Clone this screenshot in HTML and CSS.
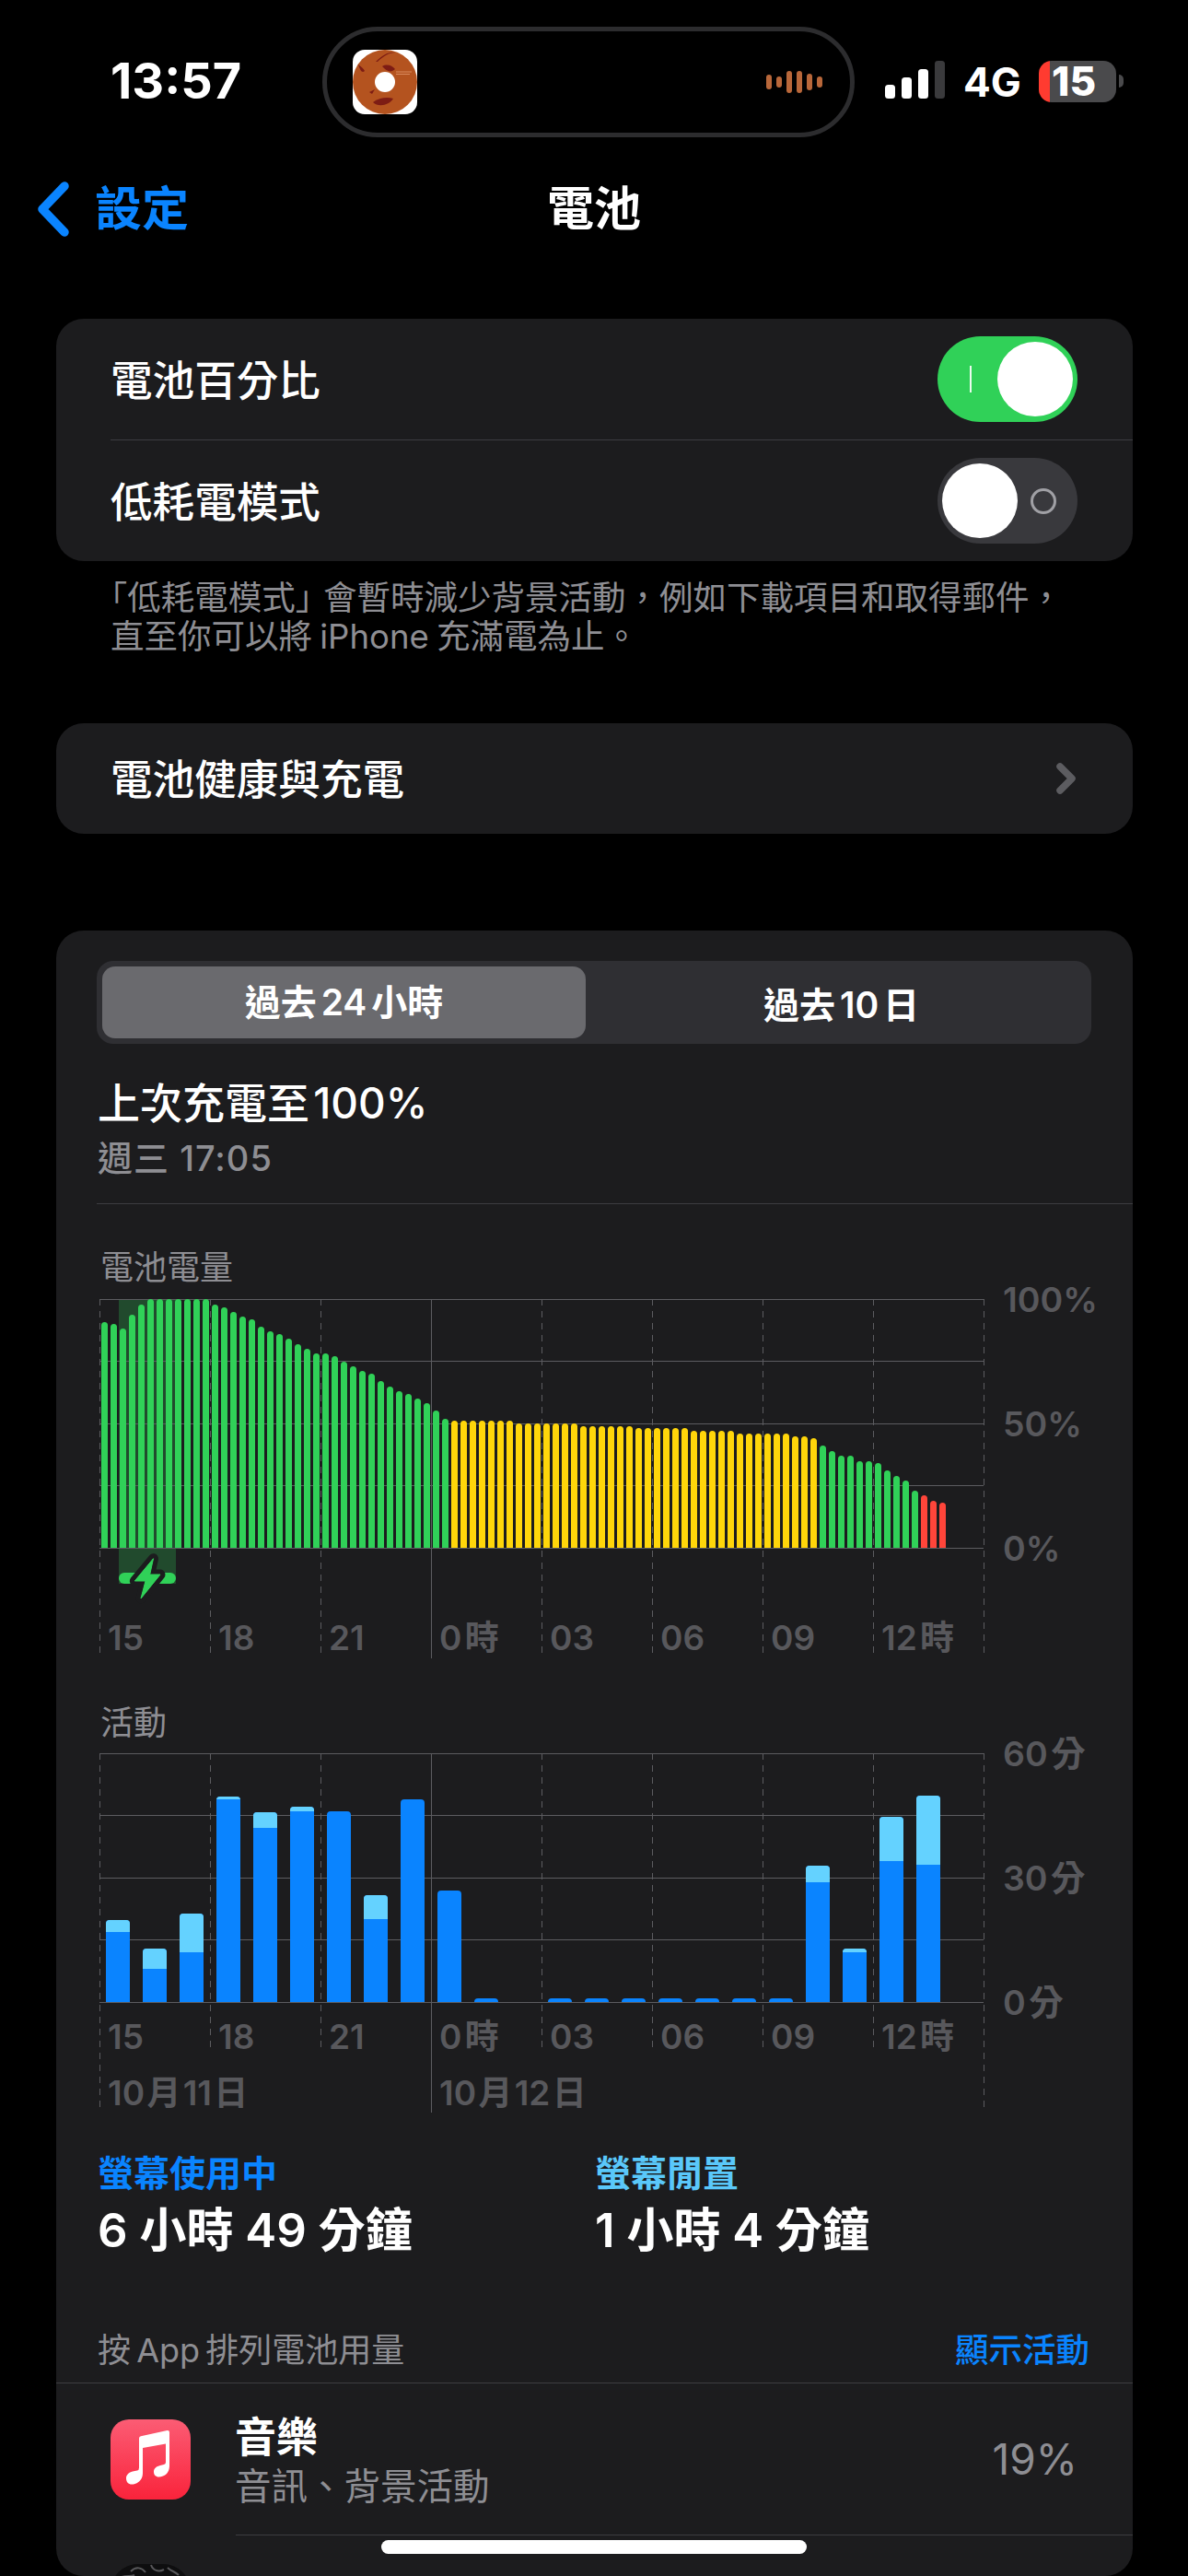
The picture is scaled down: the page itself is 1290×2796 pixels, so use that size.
FILE: index.html
```html
<!DOCTYPE html>
<html lang="zh-Hant">
<head>
<meta charset="utf-8">
<title>電池</title>
<link rel="stylesheet" href="styles.css">
</head>
<body>
<header class="status">
  <div class="time">13:57</div>
  <div class="island">
    <svg class="art" width="70" height="70" viewBox="0 0 70 70">
      <rect width="70" height="70" rx="13" fill="#fff"/>
      <circle cx="35" cy="35" r="35" fill="#b4531f"/>
      <circle cx="35" cy="35" r="11" fill="#fff"/>
      <path d="M25 13C32 6 39 2 46 3C40 3 33 7 27 13Z" fill="#7d1c14"/>
      <path d="M32 18C37 15 43 17 46 21C42 25 37 24 32 18Z" fill="#7d1c14"/>
      <path d="M6 16C9 18 12 21 13 23C10 26 8 22 6 16Z" fill="#7d1c14"/>
      <path d="M18 46L24 43L21 48Z" fill="#7d1c14"/>
      <path d="M22 57C28 52 38 51 44 53C40 60 28 63 22 57Z" fill="#7d1c14"/>
      <path d="M47 24H64M47 26.500H62" stroke="#d98a5e" stroke-width="1"/>
    </svg>
    <div class="wave">
      <i class="w16"></i><i class="w12"></i><i class="w24"></i><i class="w24"></i><i class="w18"></i><i class="w12"></i>
    </div>
  </div>
  <div class="sys">
    <svg class="signal" width="65" height="41" viewBox="0 0 65 41">
      <rect x="0" y="26" width="11" height="15" rx="3.500" fill="#fff"/>
      <rect x="18" y="18" width="11" height="23" rx="3.500" fill="#fff"/>
      <rect x="36" y="9" width="11" height="32" rx="3.500" fill="#fff"/>
      <rect x="54" y="0" width="11" height="41" rx="3.500" fill="#3a3a3c"/>
    </svg>
    <span class="net">4G</span>
    <div class="battery"><span>15</span></div>
    <i class="nub"></i>
  </div>
</header>

<nav class="nav">
  <a class="back">
    <svg width="36" height="60" viewBox="0 0 36 60"><path d="M30 5L6 30L30 55" fill="none" stroke="#0a84ff" stroke-width="9.500" stroke-linecap="round" stroke-linejoin="round"/></svg>
    <span>設定</span>
  </a>
  <h1 class="title">電池</h1>
  <div></div>
</nav>

<main class="main">
  <section class="card">
    <div class="row">
      <span>電池百分比</span>
      <div class="toggle on"><i class="bar"></i><i class="knob"></i></div>
    </div>
    <div class="sep"></div>
    <div class="row">
      <span>低耗電模式</span>
      <div class="toggle"><i class="knob"></i><i class="ring"></i></div>
    </div>
  </section>
  <p class="note"><span class="open">「</span>低耗電模式<span class="close">」</span>會暫時減少背景活動&#xFF0C;例如下載項目和取得郵件&#xFF0C;<br>直至你可以將 iPhone 充滿電為止。</p>

  <section class="card health">
    <div class="row tall">
      <span>電池健康與充電</span>
      <svg width="23" height="36" viewBox="0 0 23 36"><path d="M4 5L17 18L4 31" fill="none" stroke="#5c5c60" stroke-width="7.500" stroke-linecap="round" stroke-linejoin="round"/></svg>
    </div>
  </section>

  <section class="card usage">
    <div class="seg">
      <div class="thumb">過去 24 小時</div>
      <div class="other">過去 10 日</div>
    </div>
    <div class="last">上次充電至 100%</div>
    <div class="when">週三 17:05</div>
    <div class="rule"></div>

    <div class="ctitle">電池電量</div>
    <div class="chart">
      <div class="plot">
        <svg class="grid" width="961" height="391" viewBox="0 0 961 391">
          <rect x="21" y="0" width="67" height="270" fill="#214a2d"/>
          <rect x="21" y="270" width="62" height="39" fill="#214a2d"/>
          <rect x="21" y="297" width="62" height="12" rx="6" fill="#30d158"/>
          <path class="hl" d="M0 0.500H960M0 67.500H960M0 135.500H960M0 202.500H960M0 270.500H960"/>
          <path class="dash" d="M0.500 0V384M120.500 0V384M240.500 0V384M480.500 0V384M600.500 0V384M720.500 0V384M840.500 0V384M960.500 0V384"/>
          <path class="hl" d="M360.500 0V390"/>
          <path d="M58.500 281.700L38.300 306H50L45 325L66 299H54.700Z" fill="#30d158" stroke="#1c1c1e" stroke-width="11" stroke-linejoin="round" paint-order="stroke"/>
          <path d="M58.500 281.700L38.300 306H50L45 325L66 299H54.700Z" fill="#30d158" stroke="#30d158" stroke-width="1" stroke-linejoin="round"/>
        </svg>
        <div class="bars">
          <i class="g" style="height:245.3px"></i><i class="g" style="height:242.7px"></i><i class="g" style="height:237.7px"></i><i class="g" style="height:253.3px"></i><i class="g" style="height:264.3px"></i><i class="g" style="height:270px"></i><i class="g" style="height:270px"></i><i class="g" style="height:270px"></i><i class="g" style="height:270px"></i><i class="g" style="height:270px"></i><i class="g" style="height:270px"></i><i class="g" style="height:270px"></i>
          <i class="g" style="height:264.3px"></i><i class="g" style="height:261.3px"></i><i class="g" style="height:255.7px"></i><i class="g" style="height:250.7px"></i><i class="g" style="height:247.7px"></i><i class="g" style="height:239.7px"></i><i class="g" style="height:234.7px"></i><i class="g" style="height:231.7px"></i><i class="g" style="height:226.7px"></i><i class="g" style="height:220.7px"></i><i class="g" style="height:215.7px"></i><i class="g" style="height:210.7px"></i>
          <i class="g" style="height:210.7px"></i><i class="g" style="height:207.7px"></i><i class="g" style="height:201.7px"></i><i class="g" style="height:196.7px"></i><i class="g" style="height:191.7px"></i><i class="g" style="height:188.7px"></i><i class="g" style="height:180.7px"></i><i class="g" style="height:174.7px"></i><i class="g" style="height:169.7px"></i><i class="g" style="height:166.7px"></i><i class="g" style="height:161.7px"></i><i class="g" style="height:156.7px"></i><i class="g" style="height:148.7px"></i><i class="g" style="height:139.7px"></i>
          <i class="y" style="height:137.7px"></i><i class="y" style="height:137.7px"></i><i class="y" style="height:137.7px"></i><i class="y" style="height:137.7px"></i><i class="y" style="height:137.7px"></i><i class="y" style="height:137.7px"></i><i class="y" style="height:137.7px"></i>
          <i class="y" style="height:134.7px"></i><i class="y" style="height:134.7px"></i><i class="y" style="height:134.7px"></i><i class="y" style="height:134.7px"></i><i class="y" style="height:134.7px"></i><i class="y" style="height:134.7px"></i><i class="y" style="height:134.7px"></i>
          <i class="y" style="height:131.7px"></i><i class="y" style="height:131.7px"></i><i class="y" style="height:131.7px"></i><i class="y" style="height:131.7px"></i><i class="y" style="height:131.7px"></i><i class="y" style="height:131.7px"></i>
          <i class="y" style="height:129.7px"></i><i class="y" style="height:129.7px"></i><i class="y" style="height:129.7px"></i><i class="y" style="height:129.7px"></i><i class="y" style="height:129.7px"></i><i class="y" style="height:129.7px"></i>
          <i class="y" style="height:126.7px"></i><i class="y" style="height:126.7px"></i><i class="y" style="height:126.7px"></i><i class="y" style="height:126.7px"></i><i class="y" style="height:126.7px"></i>
          <i class="y" style="height:123.7px"></i><i class="y" style="height:123.7px"></i><i class="y" style="height:123.7px"></i><i class="y" style="height:123.7px"></i><i class="y" style="height:123.7px"></i><i class="y" style="height:123.7px"></i>
          <i class="y" style="height:120.7px"></i><i class="y" style="height:120.7px"></i><i class="y" style="height:118.7px"></i>
          <i class="g" style="height:110.7px"></i><i class="g" style="height:104.7px"></i><i class="g" style="height:99.7px"></i><i class="g" style="height:99.7px"></i><i class="g" style="height:93.7px"></i><i class="g" style="height:93.7px"></i><i class="g" style="height:91.7px"></i><i class="g" style="height:83.7px"></i><i class="g" style="height:77.7px"></i><i class="g" style="height:72.7px"></i><i class="g" style="height:61.7px"></i>
          <i class="r" style="height:56.7px"></i><i class="r" style="height:50.7px"></i><i class="r" style="height:48.7px"></i>
        </div>
        <div class="xl first"><span>15</span><span>18</span><span>21</span><span>0 時</span><span>03</span><span>06</span><span>09</span><span>12 時</span></div>
      </div>
      <div class="yl"><span>100%</span><span>50%</span><span>0%</span></div>
    </div>

    <div class="ctitle second">活動</div>
    <div class="chart">
      <div class="plot">
        <svg class="grid" width="961" height="391" viewBox="0 0 961 391">
          <path class="hl" d="M0 0.500H960M0 67.500H960M0 135.500H960M0 202.500H960M0 270.500H960"/>
          <path class="dash" d="M0.500 0V384M120.500 0V324M240.500 0V324M480.500 0V324M600.500 0V324M720.500 0V324M840.500 0V324M960.500 0V384"/>
          <path class="hl" d="M360.500 0V390"/>
        </svg>
        <div class="abars">
          <div class="a" style="height:88.7px"><i style="height:13px"></i></div>
          <div class="a" style="height:57.7px"><i style="height:21.7px"></i></div>
          <div class="a" style="height:95.7px"><i style="height:42px"></i></div>
          <div class="a" style="height:222.7px"><i style="height:3px"></i></div>
          <div class="a" style="height:205.7px"><i style="height:17px"></i></div>
          <div class="a" style="height:211.7px"><i style="height:5px"></i></div>
          <div class="a" style="height:206.7px"></div>
          <div class="a" style="height:115.7px"><i style="height:26px"></i></div>
          <div class="a" style="height:219.7px"></div>
          <div class="a" style="height:120.7px"></div>
          <div class="a" style="height:3.7px"></div>
          <div class="a" style="height:0"></div>
          <div class="a" style="height:3.7px"></div>
          <div class="a" style="height:3.7px"></div>
          <div class="a" style="height:3.7px"></div>
          <div class="a" style="height:3.7px"></div>
          <div class="a" style="height:3.7px"></div>
          <div class="a" style="height:3.7px"></div>
          <div class="a" style="height:3.7px"></div>
          <div class="a" style="height:147.7px"><i style="height:18px"></i></div>
          <div class="a" style="height:57.7px"><i style="height:4px"></i></div>
          <div class="a" style="height:200.7px"><i style="height:48px"></i></div>
          <div class="a" style="height:223.7px"><i style="height:75px"></i></div>
        </div>
        <div class="xl"><span>15</span><span>18</span><span>21</span><span>0 時</span><span>03</span><span>06</span><span>09</span><span>12 時</span></div>
        <div class="dates"><span>10 月 11 日</span><span>10 月 12 日</span></div>
      </div>
      <div class="yl"><span>60 分</span><span>30 分</span><span>0 分</span></div>
    </div>

    <div class="stats">
      <div><div class="slabel blue">螢幕使用中</div><div class="sval">6 小時 49 分鐘</div></div>
      <div><div class="slabel cyan">螢幕閒置</div><div class="sval">1 小時 4 分鐘</div></div>
    </div>

    <div class="byapp"><span>按 App 排列電池用量</span><span class="blue">顯示活動</span></div>
    <div class="app">
      <svg class="icon" width="87" height="87" viewBox="0 0 87 87">
        <defs><linearGradient id="mg" x1="0" y1="0" x2="0" y2="1"><stop offset="0" stop-color="#fb5c74"/><stop offset="1" stop-color="#fa233b"/></linearGradient></defs>
        <rect width="87" height="87" rx="20" fill="url(#mg)"/>
        <path d="M31 20.500Q31 18.700 33 18.200L61.500 12Q64 11.600 64 14V50C64 55.500 62 59.500 57 61.500C51 64 47 61.500 47 57C47 53 50 51 54 50L58 49Q60 48.500 60 46.500V26.500L35 31V58C35 63.500 32.500 68 26.500 70C20.500 72 17 68.500 17 64C17 60 20 57.500 24 56.500L29 55.500Q31 55 31 52.500Z" fill="#fff"/>
      </svg>
      <div class="atext"><div class="aname">音樂</div><div class="adesc">音訊、背景活動</div></div>
      <div class="apct">19%</div>
    </div>
    <div class="sep2"></div>
    <div class="app next">
      <svg class="icon" width="87" height="87" viewBox="0 0 87 87">
        <rect width="87" height="87" rx="30" fill="#0e0e0f"/>
        <path d="M22 8C28 2 34 4 38 9M44 1C46 7 52 9 58 6M62 4C66 8 70 8 74 12M12 14C18 12 22 14 26 12" fill="none" stroke="#57575a" stroke-width="2"/>
      </svg>
    </div>
  </section>
</main>
<div class="home"></div>
</body>
</html>
```

FILE: styles.css
```css
* { box-sizing: border-box; }
html, body { margin: 0; padding: 0; height: 2796px; overflow: hidden; background: #000; }
body {
  position: relative;
  color: #fff;
  font-family: Inter, "Noto Sans CJK TC", sans-serif;
}
i { display: block; }

/* status bar */
.status { display: grid; grid-template-columns: 350px 578px 1fr; height: 178px; padding-top: 29px; }
.time { height: 120px; padding-left: 120px; font-size: 54px; font-weight: 700; line-height: 118px; }
.island {
  display: flex; align-items: center; justify-content: space-between;
  height: 120px; padding: 0 30px 0 28px;
  background: #000; border: 5px solid #2c2c2e; border-radius: 60px;
}
.wave { display: flex; align-items: center; gap: 5px; }
.wave i { width: 6px; border-radius: 3px; background: #b8673a; }
.w12 { height: 12px; } .w16 { height: 16px; } .w18 { height: 18px; } .w24 { height: 24px; }
.sys { display: flex; align-items: flex-start; padding: 37px 0 0 33px; }
.signal { display: block; }
.net { width: 60px; margin: 3px 0 0 20px; font-size: 44px; font-weight: 700; line-height: 41px; }
.battery {
  display: flex; align-items: center;
  width: 84px; height: 45px; margin-left: 22px; padding-left: 14px;
  border-radius: 14px;
  background: linear-gradient(90deg, #ff3b30 12px, #4a4a4c 12px);
  font-size: 44px; font-weight: 800; line-height: 45px;
}
.nub { width: 5px; height: 14px; margin: 15px 0 0 3px; border-radius: 0 5px 5px 0; background: #4a4a4c; }

/* nav */
.nav { display: grid; grid-template-columns: 1fr auto 1fr; align-items: center; height: 98px; }
.back { display: flex; align-items: center; gap: 27px; padding-left: 40px; color: #0a84ff; font-size: 51px; font-weight: 600; line-height: 60px; }
.back svg { display: block; }
.title { margin: 0; font-size: 51px; font-weight: 600; line-height: 60px; }

/* cards */
.main { padding: 70px 60px 0 61px; }
.card { background: #1c1c1e; border-radius: 30px; }
.row {
  display: flex; align-items: center; justify-content: space-between;
  height: 131px; padding: 0 60px 0 59px;
  font-size: 45.6px; font-weight: 500;
}
.row > span { margin-bottom: 3px; }
.row.tall { height: 120px; }
.row.tall > span { margin-bottom: 4px; }
.row svg { display: block; }
.sep { height: 1px; margin-left: 59px; background: #3d3d41; }
.toggle {
  display: flex; align-items: center;
  width: 152px; height: 93px; padding: 0 5px;
  border-radius: 47px; background: #39393d;
}
.toggle.on { background: #30d158; }
.knob { width: 82px; height: 81px; border-radius: 50%; background: #fff; }
.on .knob { margin-left: auto; }
.bar { width: 2px; height: 29px; margin-left: 30px; background: #fff; opacity: .9; }
.ring { width: 28px; height: 28px; margin: 0 18px 0 auto; border: 3px solid #a0a0a5; border-radius: 50%; }
.note { margin: 19px 0 0 59px; color: #8e8e93; font-size: 36.5px; line-height: 42px; white-space: nowrap; word-spacing: -2px; }
.open { font-feature-settings: "halt"; }
.close { font-feature-settings: "halt"; margin-right: 12px; }
.health { margin-top: 73px; }

.usage { margin-top: 105px; padding-top: 33px; height: 1786px; }
.seg {
  display: grid; grid-template-columns: 525px 1fr; align-items: center;
  width: 1080px; height: 90px; margin-left: 44px; padding: 6px;
  border-radius: 18px; background: #2f2f33;
  font-size: 39px; font-weight: 600; text-align: center; word-spacing: -5px;
}
.thumb { height: 78px; line-height: 78px; border-radius: 14px; background: #6a6a6e; }
.other { padding-left: 12px; }
.last { margin: 36px 0 0 45px; font-size: 46px; font-weight: 500; line-height: 56px; word-spacing: -8px; }
.when { margin: 10px 0 0 45px; color: #8e8e93; font-size: 38px; font-weight: 500; line-height: 44px; letter-spacing: 1px; }
.rule { height: 1px; margin: 27px 0 0 44px; background: #3d3d41; }

/* charts */
.ctitle { margin: 47px 0 12px 48px; color: #8e8e93; font-size: 36px; line-height: 44px; }
.ctitle.second { margin-top: 48px; margin-bottom: 11px; }
.chart { display: flex; align-items: flex-start; margin-left: 47px; }
.plot { position: relative; width: 960px; height: 390px; }
.grid { position: absolute; top: 0; left: 0; }
.hl { fill: none; stroke: #5c5c60; stroke-width: 1; }
.dash { fill: none; stroke: #5c5c60; stroke-width: 1; stroke-dasharray: 7 6; }
.bars { position: relative; display: flex; align-items: flex-end; gap: 3px; height: 270px; padding-left: 2px; }
.bars i { flex: none; width: 7px; border-radius: 3.5px 3.5px 0 0; }
.g { background: #30d158; }
.y { background: #ffd60a; }
.r { background: #ff453a; }
.abars { position: relative; display: flex; align-items: flex-end; gap: 14px; height: 270px; padding-left: 7px; }
.a { flex: none; width: 26px; border-radius: 4px 4px 0 0; overflow: hidden; background: #0a84ff; }
.a i { background: #64d2ff; }
.xl { position: relative; display: grid; grid-template-columns: repeat(8, 120px); margin-top: 18px; color: #58585c; font-size: 37px; font-weight: 600; line-height: 40px; word-spacing: -6px; }
.xl.first { margin-top: 78px; }
.xl span { padding-left: 9px; }
.dates { position: relative; display: grid; grid-template-columns: 360px 360px; margin-top: 21px; color: #58585c; font-size: 37px; font-weight: 600; line-height: 40px; word-spacing: -7px; }
.dates span { padding-left: 9px; }
.yl { display: flex; flex-direction: column; justify-content: space-between; height: 270px; margin: 1px 0 0 21px; color: #58585c; font-size: 37.5px; font-weight: 600; word-spacing: -6px; }
.yl span { height: 0; line-height: 0; white-space: nowrap; }

/* stats */
.stats { display: grid; grid-template-columns: 540px 1fr; margin: 42px 0 0 45px; }
.slabel { font-size: 39px; font-weight: 600; line-height: 48px; }
.blue { color: #0a84ff; }
.cyan { color: #5ac8fa; }
.sval { margin-top: 7px; font-size: 51px; font-weight: 600; line-height: 62px; white-space: nowrap; }

.byapp { display: flex; justify-content: space-between; height: 58px; margin-top: 77px; padding: 0 47px 14px 45px; border-bottom: 1px solid #3d3d41; color: #8e8e93; font-size: 36px; line-height: 44px; word-spacing: -4px; }
.byapp .blue { font-weight: 500; font-size: 36.5px; }
.app { display: flex; align-items: center; height: 164px; padding: 0 60px 0 59px; }
.icon { display: block; flex: none; }
.atext { margin: 5px 0 0 48px; }
.aname { font-size: 45px; font-weight: 600; line-height: 50px; }
.adesc { margin-top: 4px; color: #8e8e93; font-size: 39.5px; line-height: 48px; }
.apct { margin-left: auto; color: #8e8e93; font-size: 46px; line-height: 50px; }
.sep2 { height: 1px; margin-left: 195px; background: #3d3d41; }
.app.next { align-items: flex-start; padding-top: 31px; }

.home { position: absolute; left: 414px; top: 2757px; width: 462px; height: 15px; border-radius: 8px; background: #fff; }
```
